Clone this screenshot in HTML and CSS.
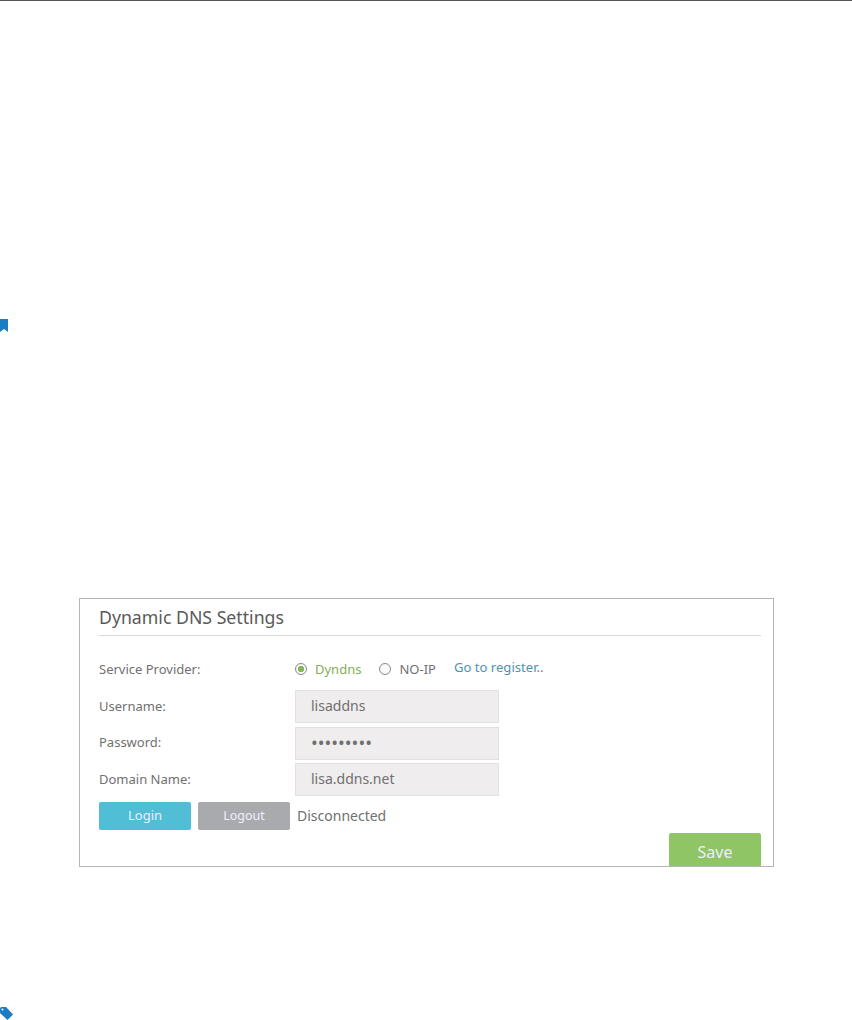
FILE: index.html
```html
<!DOCTYPE html>
<html lang="en">
<head>
    <meta charset="UTF-8">
    <meta name="viewport" content="width=device-width, initial-scale=1.0">
    <title>Dynamic DNS Settings</title>
    <link rel="stylesheet" href="styles.css">
</head>
<body>
    <div class="top-rule"></div>

    <svg class="bookmark" width="8" height="13" viewBox="0 0 8 13"><path d="M0 0H8V13L6 11.5L4 10L2 11.5L0 13Z" fill="#1b7cc4"/></svg>

    <div class="panel">
        <h2 class="panel-title">Dynamic DNS Settings</h2>

        <div class="row provider-row">
            <label class="row-label">Service Provider:</label>
            <span class="radio radio-on"></span>
            <span class="radio-text radio-text-on">Dyndns</span>
            <span class="radio"></span>
            <span class="radio-text">NO-IP</span>
            <a class="register-link" href="#">Go to register..</a>
        </div>

        <div class="row">
            <label class="row-label">Username:</label>
            <input class="text-input" type="text" value="lisaddns">
        </div>
        <div class="row">
            <label class="row-label">Password:</label>
            <input class="text-input password-input" type="password" value="lisaddns1">
        </div>
        <div class="row">
            <label class="row-label">Domain Name:</label>
            <input class="text-input" type="text" value="lisa.ddns.net">
        </div>

        <div class="actions">
            <button class="btn btn-login">Login</button>
            <button class="btn btn-logout">Logout</button>
            <span class="conn-status">Disconnected</span>
        </div>

        <div class="save-row">
            <button class="btn btn-save">Save</button>
        </div>
    </div>

    <svg class="tag" width="13" height="13" viewBox="0 0 13 13"><path d="M0 1.5Q0 0 1.5 0H6L13 7.5L7.5 13L0 6Z" fill="#1b7cc4"/><circle cx="2.5" cy="2.5" r="1" fill="#fff"/></svg>
</body>
</html>
```

FILE: styles.css
```css
html, body {
    height: 1020px;
    overflow: hidden;
}
body {
    font-family: 'Noto Sans', Tahoma, sans-serif;
    margin: 0;
    background: #fff;
    color: #707070;
    font-size: 13px;
}
.top-rule {
    height: 1px;
    background: #555;
}
.bookmark {
    display: block;
    margin-top: 318px;
}
.tag {
    display: block;
    margin-top: 140px;
}
.panel {
    box-sizing: border-box;
    width: 695px;
    height: 269px;
    margin: 266px 0 0 79px;
    padding: 0 12px 0 19px;
    border: 1px solid #b5b5b5;
    overflow: hidden;
}
.panel-title {
    margin: 0;
    height: 36px;
    line-height: 37px;
    font-size: 17.7px;
    font-weight: normal;
    color: #5a5a5a;
    border-bottom: 1px solid #d8d8d8;
}
.row {
    display: flex;
    align-items: center;
    height: 33px;
    margin-bottom: 3.6px;
}
.provider-row {
    height: 24px;
    margin-top: 21px;
    margin-bottom: 9px;
}
.row-label {
    width: 196px;
    flex: none;
    margin-top: -2px;
}
.provider-row .row-label {
    margin-top: 0;
}
.radio {
    box-sizing: border-box;
    width: 12px;
    height: 12px;
    border: 1px solid #8a8a8a;
    border-radius: 50%;
    background: #fafafa;
}
.radio-on {
    background: radial-gradient(circle, #84b85a 0 3px, #fafafa 3.5px);
}
.radio-text {
    margin: 0 18px 0 8px;
}
.radio-text-on {
    color: #86ad57;
}
.register-link {
    color: #4f93ad;
    font-size: 13.1px;
    text-decoration: none;
    margin-top: -4px;
}
.text-input {
    box-sizing: border-box;
    width: 204px;
    height: 33px;
    padding: 0 15px 2px;
    border: 1px solid #e2e0e0;
    background: #efeded;
    color: #707070;
    font-family: inherit;
    font-size: 14px;
}
.password-input {
    font-size: 18px;
}
.actions {
    display: flex;
    align-items: center;
    gap: 7px;
    margin-top: 6px;
}
.btn {
    width: 92px;
    height: 28px;
    border: none;
    border-radius: 2px;
    color: #eef;
    font-family: inherit;
    font-size: 13px;
    padding: 0 0 2px;
}
.btn-login {
    background: #50bfd6;
}
.btn-logout {
    background: #a9aaae;
    font-size: 12.5px;
}
.conn-status {
    font-size: 14px;
    margin-top: -2px;
}
.save-row {
    display: flex;
    justify-content: flex-end;
    margin-top: 3px;
}
.btn-save {
    height: 40px;
    background: #90c566;
    font-size: 16px;
    padding-bottom: 3px;
}
```
